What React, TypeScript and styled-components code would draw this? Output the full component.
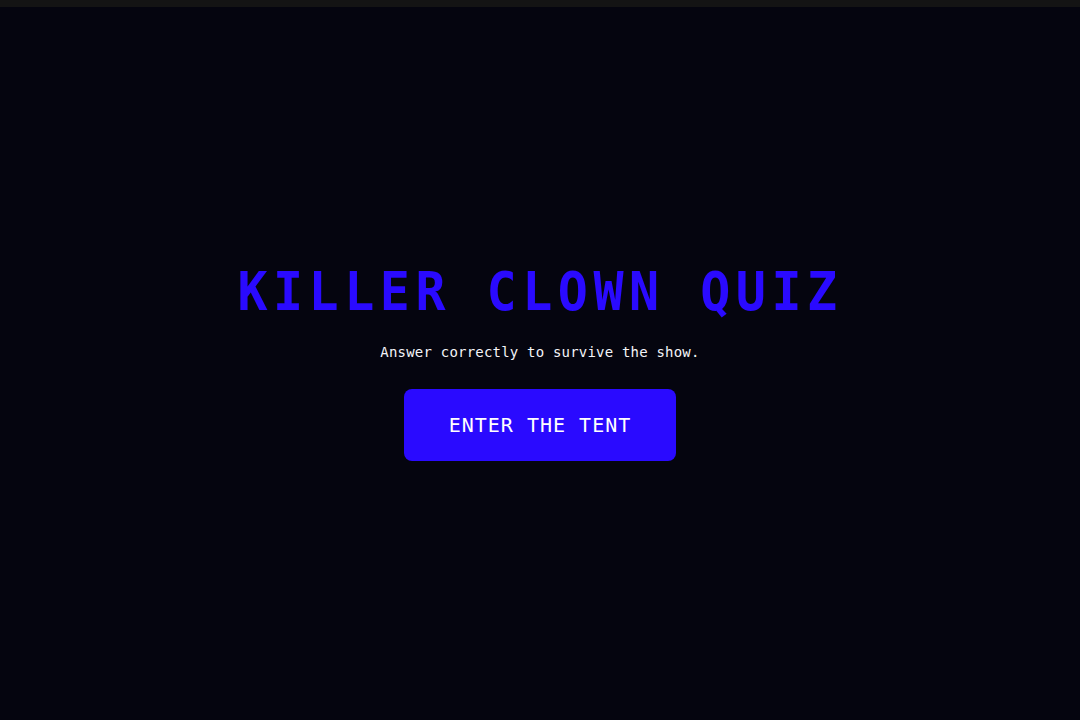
import React from "react";
import styled, { createGlobalStyle } from "styled-components";

const Global = createGlobalStyle`
  html, body { margin: 0; padding: 0; background: #05050f; }
  body { font-family: "DejaVu Sans Mono", "Liberation Mono", monospace; }
  * { box-sizing: border-box; }
`;

const Page = styled.div`
  width: 100%;
  height: 720px;
  display: flex;
  flex-direction: column;
  background: #05050f;
`;

const TopBar = styled.div`
  height: 7px;
  flex: none;
  background: #141414;
`;

const Stage = styled.main`
  flex: 1;
  display: flex;
  flex-direction: column;
  align-items: center;
  justify-content: center;
  padding-bottom: 4px;
`;

const Title = styled.h1`
  margin: 0;
  font-family: "DejaVu Sans Mono", monospace;
  font-weight: 700;
  font-size: 50px;
  line-height: 60px;
  letter-spacing: 5.5px;
  color: #2a0aff;
  transform: scaleY(1.05);
`;

const Subtitle = styled.p`
  margin: 20px 0 0;
  font-size: 14px;
  line-height: 20px;
  letter-spacing: 0.2px;
  color: #f4f4f8;
`;

const StartButton = styled.button`
  margin-top: 27px;
  width: 272px;
  height: 72px;
  border: none;
  border-radius: 8px;
  background: #2a0aff;
  color: #ffffff;
  font-family: "DejaVu Sans Mono", monospace;
  font-size: 20px;
  letter-spacing: 1px;
  cursor: pointer;
`;

export default function App() {
  return (
    <>
      <Global />
      <Page>
        <TopBar />
        <Stage>
          <Title>KILLER CLOWN QUIZ</Title>
          <Subtitle>Answer correctly to survive the show.</Subtitle>
          <StartButton>ENTER THE TENT</StartButton>
        </Stage>
      </Page>
    </>
  );
}
